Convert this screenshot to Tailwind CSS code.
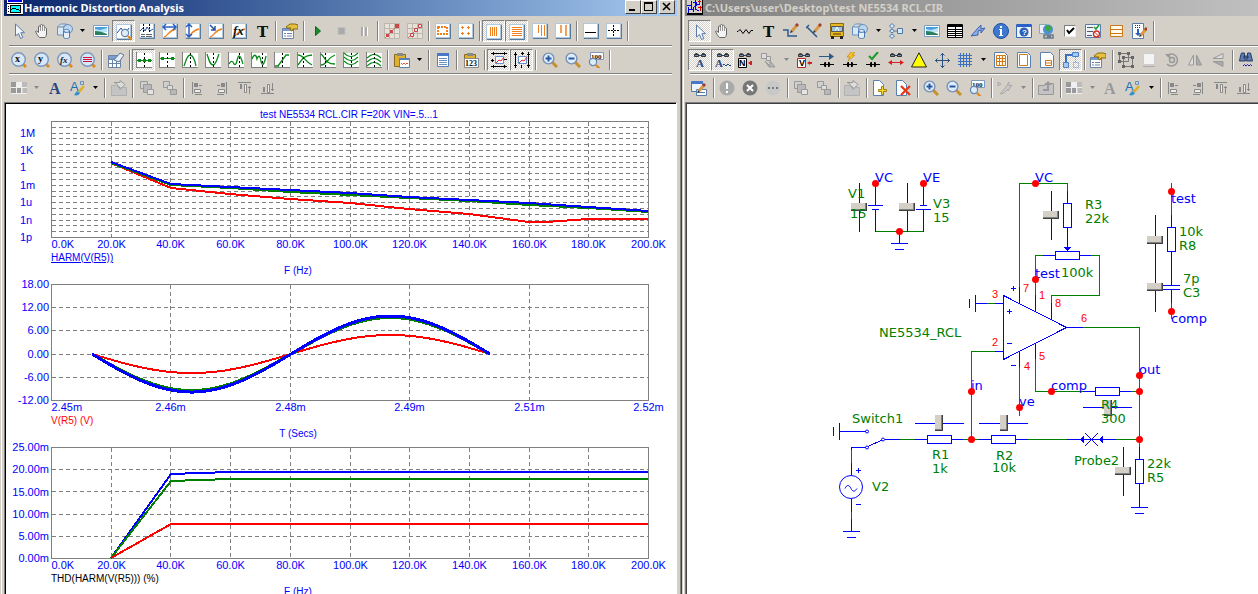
<!DOCTYPE html>
<html lang="en">
  <head>
    <meta charset="UTF-8" />
    <meta name="viewport" content="width=device-width, initial-scale=1.0" />
    <title>Harmonic Distortion Analysis</title>
    <script src="https://cdn.jsdelivr.net/npm/@tailwindcss/browser@4"></script>
  </head>
  <body class="flex h-screen overflow-hidden bg-[#d4d0c8]">
    <!-- Analysis window -->
    <section class="flex min-w-0 flex-[682] border-r border-[#404040]">
      <div class="flex min-w-0 flex-1 border-r border-[#808080] pr-[3px] pl-px">
        <div class="flex min-w-0 flex-1 flex-col border-l border-white pl-0.5">
          <header
            class="flex h-4 shrink-0 items-center bg-linear-to-r from-[#0a246a] to-[#a6caf0] pr-0.5 pl-[3px]"
          >
            <svg class="h-4 w-4 shrink-0" viewBox="0 0 16 16" shape-rendering="crispEdges">
              <path fill="#fff" d="M0 0h16v15H0z" />
              <path fill="#0000e0" d="M1 0h14v2H1z" />
              <path fill="#000" d="M0 3h16v1H0zM0 14h16v1H0zM3 5h11v8H3zM1 6h1v1H1zM1 8h1v1H1zM1 11h1v1H1z" />
              <path fill="#0ff" d="M4 6h9v6H4z" />
              <path fill="none" stroke="#000" d="M4 10l2-2h2l1 1h2l2 2" />
            </svg>
            <h1
              class="ml-px flex-1 truncate font-['Noto_Sans',sans-serif] text-[11px] leading-[14px] font-bold text-white"
            >
              Harmonic Distortion Analysis
            </h1>
            <div class="flex h-4 shrink-0 text-black">
              <button
                aria-label="Minimize"
                class="h-3.5 w-4 border border-white border-r-[#404040] border-b-[#404040] bg-[#d4d0c8]"
              >
                <svg class="h-3 w-3.5" viewBox="0 0 14 12"><path d="M3 8h6v2H3z" /></svg>
              </button>
              <button
                aria-label="Maximize"
                class="h-3.5 w-4 border border-white border-r-[#404040] border-b-[#404040] bg-[#d4d0c8]"
              >
                <svg class="h-3 w-3.5" viewBox="0 0 14 12">
                  <path d="M2 1h9v9H2zM3 3v6h7V3z" fill-rule="evenodd" />
                </svg>
              </button>
              <button
                aria-label="Close"
                class="ml-0.5 h-3.5 w-4 border border-white border-r-[#404040] border-b-[#404040] bg-[#d4d0c8]"
              >
                <svg class="h-3 w-3.5" viewBox="0 0 14 12">
                  <path d="M3 2l7 7M10 2l-7 7" stroke="#000" stroke-width="1.6" />
                </svg>
              </button>
            </div>
          </header>
          <div class="flex h-[29px] shrink-0 items-center overflow-hidden pt-px pl-[3px]" data-bar="a1"></div>
          <div class="mx-[5px] h-0.5 shrink-0 border-t border-[#808080] bg-white"></div>
          <div class="flex h-[26px] shrink-0 items-center overflow-hidden pb-px pl-[3px]" data-bar="a2"></div>
          <div class="mx-[5px] h-0.5 shrink-0 border-t border-[#808080] bg-white"></div>
          <div class="flex h-[27px] shrink-0 items-center overflow-hidden pb-0.5 pl-[3px]" data-bar="a3"></div>
          <div class="flex min-h-0 flex-1 border-t border-r border-l border-[#808080] border-r-white">
            <main class="flex-1 overflow-hidden border-t border-l border-black bg-white">
              <svg
                id="plots"
                class="block h-[490px] w-[669px] font-['Liberation_Sans',sans-serif] text-[10px]"
                viewBox="6 104 669 490"
                shape-rendering="crispEdges"
              ></svg>
            </main>
          </div>
        </div>
      </div>
    </section>

    <!-- Circuit window -->
    <section class="flex min-w-0 flex-[576] pl-px">
      <div class="flex min-w-0 flex-1 flex-col border-l border-white pl-px">
        <header
          class="flex h-4 shrink-0 items-center bg-linear-to-r from-[#808080] to-[#c0c0c0] pl-0.5"
        >
          <svg class="h-4 w-4 shrink-0" viewBox="0 0 16 16" shape-rendering="crispEdges">
            <path fill="#000" d="M0 0h16v15H0z" />
            <path fill="#d4d0c8" d="M0 0h15v13H0z" />
            <path fill="none" stroke="#0000e0" d="M0 5.5h4M4.5 1v9M1 9.5h5M5.5 2.5h4v3l-3 2v4M8.5 0v9l3 2M10 4.5h3M1.5 7v6" />
            <path fill="none" stroke="#e00000" d="M11 1.5h3M12.5 0v4M11 7.5h4M13.5 6v5" />
          </svg>
          <h1
            class="ml-0.5 flex-1 truncate font-['Noto_Sans',sans-serif] text-[11px] leading-[14px] font-bold text-[#d4d0c8]"
          >
            C:\Users\user\Desktop\test NE5534 RCL.CIR
          </h1>
        </header>
        <div class="flex h-[29px] shrink-0 items-center overflow-hidden pt-px pl-[3px]" data-bar="b1"></div>
        <div class="ml-[5px] h-0.5 shrink-0 border-t border-[#808080] bg-white"></div>
        <div class="flex h-[26px] shrink-0 items-center overflow-hidden pb-px pl-[3px]" data-bar="b2"></div>
        <div class="ml-[5px] h-0.5 shrink-0 border-t border-[#808080] bg-white"></div>
        <div class="flex h-[27px] shrink-0 items-center overflow-hidden pb-0.5 pl-[3px]" data-bar="b3"></div>
        <div class="flex min-h-0 flex-1 border-t border-l border-[#808080]">
          <main class="flex-1 overflow-hidden border-t border-l border-[#404040] bg-white">
            <svg
              id="schematic"
              class="block h-[490px] w-[571px] font-['DejaVu_Sans',sans-serif] text-[13px]"
              viewBox="687 104 571 490"
              fill="none"
              shape-rendering="crispEdges"
            ></svg>
          </main>
        </div>
      </div>
    </section>

    <script>
      // ---------- icons (16 x 16) ----------
      const page = `<path fill="#b4c8dc" d="M0 0h16v16H0z"/><path fill="#5a7a9c" d="M15 1h1v15H1v-1h14z"/><path fill="#fff" d="M1 1h13v13H1z"/>`;
      const plot = `<path fill="#fff" d="M1 1h15v14H1z"/><path fill="#808080" d="M0 0h1v16H0zM0 15h16v1H0z"/>`;
      const lens = (x, y) =>
        `<path stroke="#e08a20" stroke-width="2.4" d="M${x + 3} ${y + 3}l3.5 3.5"/><circle cx="${x}" cy="${y}" r="3.6" fill="#dcecfa" stroke="#6a86ac" stroke-width="1.2"/>`;
      const bigLens = (s) =>
        `<path stroke="#e08a20" stroke-width="3" d="M12 12l3 3"/><circle cx="7.5" cy="7.5" r="6.8" fill="#d8e8f8" stroke="#7c98bc" stroke-width="1.4"/>${s}`;
      const zoomLens = (s) =>
        `<path stroke="#c89028" stroke-width="3" d="M10 10l5 5"/><circle cx="6.5" cy="6.5" r="5.4" fill="#dcecfa" stroke="#7890b4" stroke-width="1.4"/>${s}`;
      const orange = `<path stroke="#f08020" stroke-width="1.4" d="M2 14c4-1 5-7 12-8"/>`;
      const pencil = `<path stroke="#d89848" stroke-width="3" d="M9 8l5-6"/><path stroke="#a04030" stroke-width="3" d="M13 3l2-2"/><path fill="#333" d="M7 10l1-3 2 2z"/>`;
      const glasses = `<path stroke="#444" d="M2.500 2.500l1-1h2M10 1.500h2l1.500 1M7 3.500h2"/><path fill="#6a90c8" stroke="#333" d="M2.500 2.500h4v2h-4zM9.500 2.500h4v2h-4z"/>`;
      const grey = (s) => `<g stroke="#999" fill="#b8b8b8">${s}</g>`;
      const green = (d) => `${plot}<path stroke="#0a8a1a" stroke-width="1.3" d="${d}"/>`;
      const dash = `<path stroke="#000" stroke-dasharray="2 2" d="M8.500 1v14"/>`;
      const cap = `<path stroke="#000" d="M1 12.500h14M6.500 10v5M9.500 10v5"/><path fill="#000" d="M5 10l3 2.500L5 15zM11 10l-3 2.500 3 2.500z"/>`;
      const stepGrid = `<path fill="#e6e2da" stroke="#bcb6ac" d="M.5.5h15v15H.5zM.5 5.500h15M.5 10.500h15M5.500.500v15M10.500.500v15"/><path stroke="#d07070" d="M1 15L14 2"/>`;

      const icons = {
        cursor: `<path fill="#f4f8fc" stroke="#5a7ba8" d="M4.500 1v12l3-2.500 2 5 2.300-1-2-4.800h3.700z"/>`,
        hand: `<path fill="#f4f4f4" stroke="#666" d="M5.500 14.500c-2-2-3-4-4-6 1-1 2 0 3 1V4c0-1.500 2-1.500 2 0V2.500c0-1.500 2-1.500 2 0V3c0-1 2-1 2 .5V5c1-1 2 0 2 1v5c0 2-1 3-1.500 3.500z"/><path stroke="#999" d="M6.500 4v4M8.500 3v5M10.500 4v4"/>`,
        shapes: `<path fill="#d8e8f6" stroke="#6a90bc" d="M.5 4l3-3h6v8l-3 3h-6zM.5 4h6l3-3M6.500 4v8"/><circle cx="11" cy="6" r="4.500" fill="#bcd4ec" stroke="#6a90bc"/><path fill="#e4f0fa" stroke="#4a78b0" d="M6.500 8c0-2 6-2 6 0v6c0 2-6 2-6 0zM6.500 8c0 2 6 2 6 0"/>`,
        picture: `<path fill="#fff" stroke="#7a9cc0" d="M.5 2.500h15v11H.5z"/><path fill="#48a0e0" d="M2 4h12v4H2z"/><path fill="#b8e4f8" d="M2 6l5 1 7-2v4H2z"/><path fill="#2a8060" d="M2 8c4 0 8 1 12 3v1H2z"/>`,
        scope: `${page}<path stroke="#2a50a0" d="M1 9l4-5 4 6 4-6"/>${lens(9, 9)}`,
        cursors: `${page}<path stroke="#2a50a0" d="M1 8l3-3 2 3 2-4 3 4 3-2"/><path stroke="#000" stroke-dasharray="2 1" d="M4.500 1v9M10.500 1v9"/><path stroke="#666" d="M2 11.500h4M7 11.500h6M2 13.500h4M7 13.500h6"/>`,
        horiz: `${page}${orange}<path stroke="#2a60c0" stroke-width="1.500" d="M1 4h13M4 1L1 4l3 3M11 1l3 3-3 3"/>`,
        vert: `${page}${orange}<path stroke="#2a60c0" stroke-width="1.500" d="M4 1v13M1 4l3-3 3 3M1 11l3 3 3-3"/>`,
        diag: `${page}${orange}<path stroke="#2a50a0" stroke-width="1.500" d="M2 2l5 5M7 3v4H3"/>`,
        fx: `${page}${orange}<text x="2" y="12" font-family="Liberation Serif" font-style="italic" font-weight="bold" font-size="13" fill="#111">fx</text>`,
        text: `<text x="3" y="14" font-family="DejaVu Serif" font-weight="bold" font-size="15" fill="#111">T</text>`,
        props: `<path fill="#fff" stroke="#6a84a8" d="M.5 5.500h11v10H.5z"/><path fill="#7a9cd0" d="M1 6h10v2H1z"/><path stroke="#6a84a8" d="M2 10.500h2M5 10.500h5M2 13h2M5 13h5"/><path fill="#e8c040" stroke="#8a6a10" d="M4 4l4-3h5l3 1v4h-5l-1 2-2-1 1-2H5z"/>`,
        play: `<path fill="#1a8a2a" stroke="#0a6a1a" d="M5.500 3.500v9L10.500 8z"/>`,
        stop: `<path fill="#aaa" stroke="#c0c0c0" d="M5 4.500h7v7H5z"/>`,
        pause: `<path fill="#aaa" d="M5 4h2v9H5zM9 4h2v9H9z"/><path fill="#fff" d="M7 4h1v9H7zM11 4h1v9h-1z"/>`,
        steps: `${stepGrid}<path fill="#c84848" d="M11 1h4v4h-4zM6 7h3v3H6zM2 11h3v3H2z"/>`,
        stepsOpen: `${stepGrid}<path fill="#f4e0e0" stroke="#c84848" d="M11.500 1.500h3v3h-3zM7.500 5.500h3v3h-3zM3.500 10.500h3v3h-3z"/>`,
        select: `${page}<path stroke="#f08020" stroke-width="2" stroke-dasharray="2 1" d="M3 4h9v7H3z"/>`,
        dots: `${page}<path stroke="#f08020" d="M4.500 3v3M3 4.500h3M10.500 3v3M9 4.500h3M4.500 9v3M3 10.500h3M10.500 9v3M9 10.500h3"/>`,
        vlines: `${page}<path stroke="#f08020" d="M4.500 3v9M6.500 3v9M8.500 3v9M10.500 3v9"/>`,
        hlines: `${page}<path stroke="#f08020" d="M3 3.500h10M3 5.500h10M3 7.500h10M3 9.500h10M3 11.500h10"/>`,
        vmajor: `${page}<path stroke="#f08020" d="M6.500 2v8M9.500 2v11M12.500 2v11"/>`,
        vtwo: `${page}<path stroke="#f08020" stroke-width="1.500" d="M6 2v8M11 2v11"/>`,
        baseline: `${page}<path stroke="#000" d="M2 9.500h11"/>`,
        tracker: `${page}<path stroke="#000" stroke-dasharray="2 1" d="M2 7.500h11M7.500 2v11"/>`,
        lensX: bigLens(`<text x="4" y="10" font-family="Liberation Serif" font-weight="bold" font-size="10" fill="#111">x</text>`),
        lensY: bigLens(`<text x="4" y="10" font-family="Liberation Serif" font-weight="bold" font-size="10" fill="#111">y</text>`),
        lensF: bigLens(`<text x="3" y="11" font-family="Liberation Serif" font-style="italic" font-weight="bold" font-size="9" fill="#223">fx</text>`),
        lensLines: bigLens(`<path stroke="#d01040" d="M3 5.500h9M3 7.500h9M3 9.500h9"/>`),
        tableErase: `<path fill="#fff" stroke="#6a84a8" d="M.5 3.500h12v12H.5zM.5 7.500h12M.5 11.500h12M4.500 7v8M8.500 7v8"/><path fill="#7a9cd0" d="M1 4h11v3H1z"/><path fill="#e8eef6" stroke="#607898" d="M6 8l6-7 4 2-5 7z"/>`,
        mid: `${plot}<path stroke="#0a8a1a" d="M1 8.500h15"/>${dash}<path fill="#0a8a1a" d="M2 7h3v3H2zM7 7h3v3H7zM12 7h3v3h-3z"/>`,
        midOpen: `${plot}<path stroke="#0a8a1a" d="M1 6.500h15"/>${dash}<path fill="#0a8a1a" d="M2 5h3v3H2zM12 5h3v3h-3z"/>`,
        peak: green("M2 14C4 9 5 3 8 3s5 6 6 11") + dash,
        valley: green("M2 2c2 6 3 11 6 11s4-6 6-11") + dash,
        high: green("M1 12c2-4 4-3 5 0 3 3 3-8 5-8s3 5 4 8") + `<path stroke="#000" stroke-dasharray="2 2" d="M11.500 1v14"/>`,
        low: green("M1 7c2-5 4-5 5 0 2-5 3-3 4 2s3 5 5-5") + `<path stroke="#000" stroke-dasharray="2 2" d="M11.500 1v14"/>`,
        slope: green("M4 14L12 3h3M1 14h4") + `<path stroke="#000" stroke-dasharray="2 2" d="M8.500 1v14"/>`,
        crossA: green("M1 13C5 8 5 4 15 3M1 3c6 0 7 7 14 10") + `<path stroke="#000" stroke-dasharray="2 2" d="M6.500 1v14"/>`,
        crossB: green("M1 2c5 4 4 10 14 10M1 13c6 0 6-7 14-10") + `<path stroke="#000" stroke-dasharray="2 2" d="M5.500 1v14"/>`,
        famDown: green("M1 1c5 5 9 5 14 0M1 5c5 5 9 5 14 0M1 9c5 5 9 5 14 0") + dash,
        famUp: green("M1 6c5-5 9-5 14 0M1 10c5-5 9-5 14 0M1 14c5-5 9-5 14 0") + dash,
        pastePlot: `<path fill="#e0b030" stroke="#8a6a20" d="M.5 2.500h11v12H.5z"/><path fill="#888" d="M3 1h6v3H3z"/><path fill="#fff" stroke="#5a80b0" d="M5.500 6.500h10v9h-10z"/><path fill="#5a80b0" d="M5 6h10v2H5z"/><path stroke="#e05030" d="M7 11l1.500 1.500L10 11l1.500 1.500L13 11l1 1"/>`,
        list: `<path fill="#fff" stroke="#5a80b8" d="M2.500 1.500h11v13h-11z"/><path fill="#4a78c8" d="M2 1h12v3H2z"/><path stroke="#6a90c8" d="M4 6.500h8M4 8.500h8M4 10.500h8M4 12.500h8"/>`,
        paste123: `<path fill="#e0b030" stroke="#8a6a20" d="M1.500 2.500h11v12h-11z"/><path fill="#888" d="M4 1h6v3H4z"/><path fill="#fff" stroke="#888" d="M1.500 6.500h14v9h-14z"/><text x="2" y="14" font-family="Liberation Serif" font-weight="bold" font-size="8" fill="#111">123</text>`,
        fitH: `<path fill="#fff" stroke="#6a90c8" d="M4.500 4.500h8v7h-8z"/><path stroke="#d83030" d="M5 11l3-3 2 1 3-4"/><path stroke="#000" d="M0 1.500h16M0 14.500h16M2.500 0v3M13.500 0v3M2.500 13v3M13.500 13v3M0 8.500h3M1.500 7v3M13 7.500h3"/>`,
        fitV: `<path fill="#fff" stroke="#6a90c8" d="M4.500 4.500h8v7h-8z"/><path stroke="#d83030" d="M5 11l3-3 2 1 3-4"/><path stroke="#000" d="M1.500 0v16M14.500 0v16M0 2.500h3M0 13.500h3M13 2.500h3M13 13.500h3M8.500 0v3M7 1.500h3M7.500 13v3"/>`,
        zoomIn: zoomLens(`<path stroke="#2a58a0" stroke-width="2" d="M3.500 6.500h6M6.500 3.500v6"/>`),
        zoomOut: zoomLens(`<path stroke="#2a58a0" stroke-width="2" d="M3.500 6.500h6"/>`),
        zoom100: `<path fill="#fff" stroke="#7c98bc" d="M2.500.5h13v7h-13z"/><text x="3" y="7" font-family="Liberation Serif" font-weight="bold" font-size="7" fill="#111">100</text>${lens(5, 10)}`,
        swatches: `<path fill="#999" d="M0 2h5v5H0zM0 8h5v5H0zM6 8h5v5H6z"/><path fill="#f0f0f0" d="M6 2h5v5H6z"/><path fill="#bbb" d="M11 2h5v5h-5zM12 8h4v5h-4z"/><path stroke="#eee" d="M0 7.500h16M5.500 2v11M10.500 2v11M0 13.500h16"/>`,
        letter: `<text x="2" y="14" font-family="Liberation Serif" font-weight="bold" font-size="16" fill="#2a4680">A</text>`,
        letterOff: `<text x="2" y="14" font-family="Liberation Serif" font-weight="bold" font-size="16" fill="#999">A</text>`,
        brush: `<text x="0" y="11" font-family="Liberation Sans" font-size="13" fill="#1c70b0">A</text><path stroke="#6890c0" d="M10.500 1.500h3v3h-3z"/><path stroke="#e0b020" stroke-width="2.500" d="M14 6l-5 6"/><path fill="#3090d0" d="M4 15l3-4 3 2c-1 2-3 3-6 2z"/>`,
        exportOff: grey(`<path fill="#c4c4c4" stroke="#b0b0b0" d="M.5 5.500h5l2 2h8v8H.5z"/><path fill="#ddd" d="M3 2.500h6V.500l5 4-5 5V7H7c0-2-1-4-4-4.500z"/>`),
        frontOff: grey(`<path fill="#d0d0d0" d="M1.500 1.500h7v7h-7z"/><path d="M4.500 4.500h8v8h-8z"/><path fill="#e4e4e4" d="M8.500 9.500h6v5h-6z"/>`),
        backOff: grey(`<path fill="#d0d0d0" d="M1.500 1.500h6v6h-6z"/><path fill="#ddd" d="M5.500 5.500h5v4h-5z"/><path d="M8.500 9.500h6v5h-6z"/>`),
        alignL: `<path fill="#888" d="M2 2h1v12H2zM4 3h4v4H4z"/><path fill="#eee" stroke="#888" d="M4.500 9.500h6v3h-6z"/><path stroke="#888" d="M12 5.500H9M5 14.500h7"/>`,
        alignR: `<path fill="#888" d="M13 2h1v12h-1zM8 3h4v4H8z"/><path fill="#eee" stroke="#888" d="M5.500 9.500h6v3h-6z"/><path stroke="#888" d="M4 5.500h3M4 14.500h7"/>`,
        alignT: `<path fill="#888" d="M2 2h13v1H2zM4 4h2v5H4z"/><path fill="#eee" stroke="#888" d="M8.500 4.500h2v8h-2z"/><path stroke="#888" d="M13.500 14V6M12 7.500h3"/>`,
        alignB: `<path fill="#888" d="M2 13h13v1H2zM4 7h2v5H4z"/><path fill="#eee" stroke="#888" d="M8.500 4.500h2v8h-2z"/><path stroke="#888" d="M13.500 3v8M12 9.500h3"/>`,
        zigzag: `<path stroke="#000" d="M0 8.500h1l2-2 3 4 3-4 3 4 2-3h2"/>`,
        wire: `<path stroke="#2a5a8a" stroke-width="1.500" d="M0 7h5v6h9"/>${pencil}`,
        wireDiag: `<path stroke="#2a5a8a" stroke-width="1.500" d="M1 4l10 10M0 5l3-3"/>${pencil}`,
        bus: `<path fill="#e8b820" stroke="#8a6a10" d="M1.500.5h13v13h-13z"/><path fill="#9cc4dc" stroke="#555" d="M2.500 3.500h11v5h-11z"/><path stroke="#fff" d="M6 8l2-4 2 4"/><path fill="#222" d="M2 13h3v3H2zM11 13h3v3h-3z"/><path fill="#a07810" d="M4 10h8v2H4z"/>`,
        flow: `<path fill="#d8e8f6" stroke="#4a78a8" d="M4 .5L6.500 3 4 5.500 1.500 3zM4 6L6.500 8 4 10 1.500 8zM4 11l2.500 2L4 15.500 1.500 13zM9.500 5.500h5v5h-5zM6.500 8h3"/>`,
        table: `<path fill="#fff" stroke="#000" d="M.5 1.500h15v13H.5z"/><path fill="#000" d="M1 1h14v3H1z"/><path stroke="#000" d="M1 6.500h14M1 8.500h14M1 10.500h14M1 12.500h14M8.500 2v12"/>`,
        pen: `<path fill="#8ab0e8" stroke="#3a60b0" d="M1 13L8 5l3-3v4l4-1-4 5V7l-3 1v4z"/>`,
        info: `<circle cx="8" cy="8" r="7.500" fill="#3c78d0" stroke="#2050a0"/><path fill="#fff" d="M7 3h2v2H7zM6 6h3v6h1v1H6v-1h1V7H6z"/>`,
        help: `<path fill="#eef4fc" stroke="#3a68b8" d="M.5 1.500h15v13H.5z"/><path fill="#2a60c8" d="M1 1h14v3H1z"/><circle cx="8" cy="9" r="4.500" fill="#2a60b8"/><text x="6" y="12" font-family="Liberation Sans" font-weight="bold" font-size="8" fill="#fff">?</text>`,
        globe: `<path fill="#eef" stroke="#8aa" d="M.5 1.500h7v9h-7z"/><circle cx="9" cy="6.500" r="5" fill="#4a90d8"/><path fill="#40a840" d="M6 3l4-1 3 3-3 4-3-2z"/><path stroke="#6a7a8a" stroke-width="1.500" d="M5 12h4v3H5zM10 12h4v3h-4zM8 13.500h4"/>`,
        options: `<path fill="#eef4fc" stroke="#5a7ca8" d="M.5 1.500h15v13H.5z"/><path stroke="#555" d="M2 4.500h6M2 8.500h6M2 12.500h5"/><path stroke="#1a9a2a" stroke-width="1.500" d="M9 4l2 2 3-4"/><circle cx="11.500" cy="11" r="3" fill="#fff" stroke="#d83020" stroke-width="1.400"/><path stroke="#d83020" d="M9.500 9l4 4"/>`,
        rows: `<path fill="#fffaf0" stroke="#d07818" d="M2.500 2.500h12v11h-12zM2.500 6.500h12M2.500 10.500h12"/>`,
        dropPen: `<path fill="#fff" stroke="#5a7ca8" d="M1.500.5h11v15h-11z"/><path stroke="#333" stroke-dasharray="1 1" d="M4 2.500h6M4 4.500h6"/><path fill="#2a60c0" d="M6 6h2v4h2l-3 3-3-3h2z"/><g transform="translate(1 4)">${pencil}</g>`,
        showA: `${glasses}<text x="4" y="15" font-family="Liberation Serif" font-weight="bold" font-size="11" fill="#2a4680">A</text>`,
        showAw: `${glasses}<text x="0" y="15" font-family="Liberation Serif" font-weight="bold" font-size="11" fill="#2a4680">A</text><path stroke="#2a4680" d="M8 13l1-1 2 2 2-2 2 2 1-1"/>`,
        showN: `${glasses}<path fill="#fff" stroke="#000" d="M1.500 6.500h8v9h-8z"/><text x="2" y="14" font-family="Liberation Sans" font-weight="bold" font-size="9" fill="#000">N</text><path fill="#d02020" d="M11 11l3-2v4zM13 9h2v4h-2z"/>`,
        showV: `${glasses}<path fill="#fff" stroke="#c02020" d="M1.500 6.500h8v9h-8z"/><text x="3" y="14" font-family="Liberation Sans" font-weight="bold" font-size="9" fill="#000">V</text><path fill="#d02020" d="M11 11l3-2v4zM13 10h3v2h-3z"/>`,
        copyOff: grey(`<path fill="#ddd" d="M1.500 1.500h5v5h-5zM6.500 4.500h4v4h-4z"/><path d="M5 9l5 5V9l5 6h-6z"/>`),
        current: `<path stroke="#2a5a8a" d="M0 4.500h13"/><path fill="#2a5a8a" d="M10 1l5 3.500L10 8z"/>${cap}`,
        power: `<path fill="#f8c020" stroke="#c08010" stroke-width=".6" d="M9 0h4l-3 3h3L6 9l2-4H5z"/>${cap}`,
        check: `<path stroke="#1a9a2a" stroke-width="2" d="M4 4l3 3 6-7"/>${cap}`,
        measure: `${glasses}<path stroke="#d02020" d="M2 10.500h12"/><path fill="#d02020" d="M0 10.500L4 8v5zM16 10.500L12 8v5z"/>`,
        warn: `<path fill="#ffff00" stroke="#222" d="M8 .8L15.500 15H.5z"/>`,
        cross: `<path stroke="#2a5080" d="M8.500 1v15M1 8.500h15M6.500 3.500l2-2 2 2M6.500 13.500l2 2 2-2M3.500 6.500l-2 2 2 2M13.500 6.500l2 2-2 2"/>`,
        grid: `<path stroke="#3a70c0" d="M3.500 1v14M6.500 1v14M9.500 1v14M12.500 1v14M1 3.500h14M1 6.500h14M1 9.500h14M1 12.500h14"/>`,
        pageGrid: `<path fill="#fffaf0" stroke="#5a80b0" d="M1.500.5h10l3 3v12h-13z"/><path stroke="#d07818" d="M3.500 3.500h9v10h-9zM3.500 6.500h9M3.500 9.500h9M6.500 3v10M9.500 3v10"/>`,
        pageBox: `<path fill="#fff" stroke="#5a80b0" d="M1.500.5h10l3 3v12h-13z"/><path stroke="#d07818" d="M3.500 2.500h8v11h-8z"/>`,
        pageTitle: `<path fill="#fff" stroke="#5a80b0" d="M1.500.5h10l3 3v12h-13z"/><path stroke="#d07818" d="M6.500 8.500h6v5h-6zM6 11h6"/>`,
        rubber: `<path fill="#a8c8f0" stroke="#4a80c8" d="M9.500.5h6v4h-6zM.5 10.500h5v5h-5z"/><path stroke="#3a70c0" stroke-width="2" d="M9 3H3v7"/><path stroke="#6a90c8" stroke-dasharray="1 1" d="M10.500 10.500h5v5h-5zM12.500 5v5"/>`,
        group: `<path stroke="#777" d="M1.500 1.500h9v8h-9zM5.500 5.500h9v9h-9z"/><path fill="#666" d="M0 0h3v3H0zM9 0h3v3H9zM0 8h3v3H0zM4 13h3v3H4zM13 13h3v3h-3zM13 4h3v3h-3zM4 4h3v3H4z"/>`,
        pageOff: `<path fill="#f4f4f4" stroke="#ccc" d="M2.500 1.500h11v11h-11z"/><path fill="#aaa" d="M2 14h12v1H2z"/>`,
        rotate: `<path stroke="#999" stroke-width="1.500" d="M3 4a6 6 0 1 1 0 8"/><circle cx="8" cy="8" r="2.500" stroke="#999" stroke-width="1.500"/><path fill="#999" d="M1 2h5v5z"/>`,
        flipH: `<path fill="#ddd" stroke="#999" d="M6.500 3v10h-5z"/><path fill="#aaa" stroke="#999" d="M9.500 3v10h5z"/>`,
        flipV: `<path fill="#ddd" stroke="#999" d="M13 1.500v5H3z"/><path fill="#aaa" stroke="#999" d="M13 14.500v-5H3z"/>`,
        find: `<path fill="#5a7cb0" stroke="#2a3c68" d="M3.500 1h3v3l1 5h-6l1-5zM9.500 1h3l2 8h-6l1-5zM6 4h4v2H6z"/><path stroke="#2020a0" d="M5 14l1.500-1.500L8 14l1.500-1.500L11 14l1.500-1.500L14 14"/>`,
        editForm: `<path fill="#eef4fc" stroke="#4a78b8" d="M.5 1.500h11v10H.5z"/><path fill="#4a78c8" d="M1 1h11v3H1z"/><path fill="#fff" stroke="#5a7ca8" d="M5.500 9.500h10v6h-10z"/><path stroke="#5a7ca8" d="M7 12.500h7"/><g transform="translate(-1 3)">${pencil}</g>`,
        bang: `<circle cx="8" cy="8" r="7.500" fill="#aaa"/><path fill="#fff" d="M7 3h2v6H7zM7 11h2v2H7z"/>`,
        cancel: `<circle cx="8" cy="8" r="7.500" fill="#777"/><path stroke="#fff" stroke-width="2" d="M5 5l6 6M11 5l-6 6"/>`,
        more: `<circle cx="8" cy="8" r="7.500" fill="#c8c8c8"/><path fill="#777" d="M3 7h2v2H3zM7 7h2v2H7zM11 7h2v2h-2z"/>`,
        addPage: `<path fill="#fff" stroke="#5a80b0" d="M1.500.5h6l4 4v11h-10z"/><path fill="#f8d828" stroke="#a08010" d="M9.500 6.500h2v3h3v2h-3v3h-2v-3h-3v-2h3z"/>`,
        delPage: `<path fill="#fff" stroke="#5a80b0" d="M1.500.5h6l4 4v11h-10z"/><path stroke="#e83818" stroke-width="2.200" d="M6 6l9 9M15 6l-9 9"/>`,
        penOff: `<path fill="#c8c8c8" stroke="#aaa" d="M3 14l6-7 3-5v4l3-1-4 6V9l-4 4zM1 2l3 2-3 2z"/>`,
        folderUp: grey(`<path fill="#c4c4c4" d="M.5 5.500h6l1-2h8v11H.5z"/><path fill="#999" stroke="none" d="M10 1l4 4h-3v6H5V9h4V5H6z"/>`),
      };

      // ---------- toolbars: "|" separator, "v" drop-down arrow, "w" disabled arrow, "*" pressed ----------
      const bars = {
        a1: "cursor hand shapes v picture *scope cursors horiz vert diag fx text | props | play stop pause | steps stepsOpen | select dots | *vlines *hlines vmajor vtwo | baseline tracker |",
        a2: "lensX lensY lensF lensLines | tableErase | *mid midOpen peak valley high low slope crossA crossB famDown famUp | pastePlot v | list | paste123 | *fitH *fitV | zoomIn zoomOut zoom100 |",
        a3: "swatches w letter brush v | exportOff | frontOff backOff | alignL alignR alignT alignB",
        b1: "*cursor hand zigzag text wire wireDiag bus shapes v flow v picture table pen info help globe tick options rows dropPen |",
        b2: "*showA *showAw showN copyOff w showV current power check measure warn cross grid v pageGrid pageBox pageTitle *rubber | props | group pageOff rotate flipH flipV | find",
        b3: "editForm | bang cancel more | frontOff backOff | exportOff | addPage delPage | zoomIn zoomOut zoom100 | penOff w | folderUp | swatches w letterOff brush v | alignL alignR alignT alignB",
      };

      function toolItem(token) {
        if (token === "|")
          return `<span class="mr-px ml-0.5 h-5 w-0.5 shrink-0 border-l border-[#808080] bg-white"></span>`;
        if (token === "v" || token === "w")
          return `<button aria-label="More" class="flex h-[22px] w-[13px] shrink-0 items-center justify-center">
            <svg class="h-1 w-[5px]" viewBox="0 0 5 4"><path d="M0 0h5L2.500 3z" fill="${token === "v" ? "#000" : "#888"}"/></svg></button>`;
        if (token === "tick")
          return `<label class="relative flex h-[22px] w-[23px] shrink-0 items-center justify-center">
            <input type="checkbox" checked aria-label="Enable" class="peer size-3 appearance-none border border-[#808080] border-r-[#eee] border-b-[#eee] bg-white" />
            <svg class="pointer-events-none absolute hidden size-3 peer-checked:block" viewBox="0 0 12 12"><path d="M3 5l2 3 5-5" fill="none" stroke="#000" stroke-width="2"/></svg></label>`;
        const pressed = token.startsWith("*");
        const name = token.replace("*", "");
        const look = pressed
          ? "border border-[#808080] border-r-white border-b-white [background-image:repeating-conic-gradient(#fff_0_25%,#d4d0c8_0_50%)] bg-[length:2px_2px] pt-px pl-px"
          : "";
        return `<button aria-label="${name}" aria-pressed="${pressed}" class="flex h-[22px] w-[23px] shrink-0 items-center justify-center ${look}">
          <svg class="h-4 w-4 shrink-0" viewBox="0 0 16 16" fill="none">${icons[name]}</svg></button>`;
      }

      document.querySelectorAll("[data-bar]").forEach((bar) => {
        bar.innerHTML = bars[bar.dataset.bar].split(" ").map(toolItem).join("");
      });

      // ---------- plots ----------
      const left = 51.5;
      const right = 648.5;
      const label = (x, y, text, anchor = "middle", extra = "") =>
        `<text x="${x}" y="${y}" text-anchor="${anchor}" fill="#0000ff" ${extra}>${text}</text>`;

      function drawPlot({ top, bottom, rows, cols, xLabels, yLabels, yAnchor, yX, series, name, nameAttr, axis }) {
        const base = bottom - 0.5;
        let out = "";
        for (let i = 1; i < rows; i++) {
          const y = Math.round(top + ((bottom - top) * i) / rows - 0.5) + 0.5;
          out += `<path d="M${left} ${y}H${right}" stroke="#808080" stroke-dasharray="4 3"/>`;
        }
        const step = (right - left) / cols;
        for (const [i, text] of xLabels) {
          const x = Math.round(left + step * i - 0.5) + 0.5;
          if (i > 0 && i < cols)
            out += `<path d="M${x} ${top}V${bottom}" stroke="#808080" stroke-dasharray="4 3"/>`;
          out += label(i ? x : left, base + 11, text, i ? "middle" : "start", 'font-size="11"');
        }
        for (const [y, text] of yLabels) out += label(yX, y + 4, text, yAnchor, 'font-size="11"');
        out += `<rect x="${left}" y="${top}" width="${right - left}" height="${bottom - top}" fill="none" stroke="#808080"/>`;
        for (const [color, width, points] of series)
          out += `<polyline points="${points}" fill="none" stroke="${color}" stroke-width="${width}"/>`;
        out += `<text x="51" y="${base + 24}" ${nameAttr}>${name}</text>`;
        out += label(298, base + 37, axis);
        return out;
      }

      function sine(amplitude) {
        const pts = [];
        for (let x = 92; x <= 490; x += 2)
          pts.push(`${x},${(354 + amplitude * Math.sin(((x - 92) / 398) * 2 * Math.PI)).toFixed(1)}`);
        return pts.join(" ");
      }

      const freqs = ["0.0K", "20.0K", "40.0K", "60.0K", "80.0K", "100.0K", "120.0K", "140.0K", "160.0K", "180.0K", "200.0K"].map((t, i) => [i, t]);

      document.getElementById("plots").innerHTML =
        label(349, 118, "test NE5534 RCL.CIR F=20K VIN=.5...1") +
        drawPlot({
          top: 121.5, bottom: 237.5, rows: 20, cols: 10, xLabels: freqs,
          yLabels: [[133, "1M"], [150, "1K"], [167, "1"], [185, "1m"], [202, "1u"], [220, "1n"], [237, "1p"]],
          yAnchor: "start", yX: 20,
          series: [
            ["#ff0000", 2, "111,163 171,188 230,194 290,199 350,203 409,209 469,214 529,222 546,222 588,219 648,219"],
            ["#008000", 2, "111,163 171,185 230,188 290,192 350,195 409,198 469,201 529,205 588,208 648,212"],
            ["#0000ff", 2, "111,162 171,184 230,187 290,190 350,193 409,197 469,200 529,203 588,207 648,211"],
          ],
          name: "HARM(V(R5))", nameAttr: 'fill="#0000ff" text-decoration="underline"', axis: "F (Hz)",
        }) +
        drawPlot({
          top: 284.5, bottom: 400.5, rows: 5, cols: 5,
          xLabels: ["2.45m", "2.46m", "2.48m", "2.49m", "2.51m", "2.52m"].map((t, i) => [i, t]),
          yLabels: [[284, "18.00"], [307, "12.00"], [330, "6.00"], [354, "0.00"], [377, "-6.00"], [400, "-12.00"]],
          yAnchor: "end", yX: 49,
          series: [["#ff0000", 2, sine(19)], ["#008000", 3, sine(36.5)], ["#0000ff", 3, sine(38)]],
          name: "V(R5) (V)", nameAttr: 'fill="#ff0000"', axis: "T (Secs)",
        }) +
        drawPlot({
          top: 447.5, bottom: 558.5, rows: 5, cols: 10, xLabels: freqs,
          yLabels: [[447, "25.00m"], [469, "20.00m"], [492, "15.00m"], [514, "10.00m"], [536, "5.00m"], [558, "0.00m"]],
          yAnchor: "end", yX: 49,
          series: [
            ["#0000ff", 2, "111,558 171,474 200,473 230,472 648,472"],
            ["#008000", 2, "111,558 171,481 200,480 230,479 648,479"],
            ["#ff0000", 2, "111,558 171,524 648,524"],
          ],
          name: "THD(HARM(V(R5))) (%)", nameAttr: 'fill="#000"', axis: "F (Hz)",
        });

      // ---------- schematic ----------
      const wires = `M875 231.5H924M1019.5 287V183.5H1067.5V191M1043 255.5H1035.5V295M1091 255.5H1099.5V295.5H1051.5V303
        M987 303.5H995M995 351.5H971.5V439M1083 327.5H1139.5V447M1019.5 367V416M1035.5 359V391.5H1083M1131 391.5H1139
        M900 439.5H915M963 439.5H979M1028 439.5H1067M1116 439.5H1139M851.5 449V463M851.5 512V519M1171.5 183V215M1171.5 303V319`;
      const parts = `M875.5 183V205M868 205.5H883M872 209.5H879M875.5 209V232M859.5 183V232
        M923.5 183V205M920 205.5H927M916 209.5H931M923.5 209V232M907.5 183V232M899.5 232V243M891 243.5H908M895 249.5H904
        M1019.5 287V303M1067.5 191V203M1063.5 203.5h8v24h-8zM1067.5 228V251M1055.5 251.5h24v8h-24zM1043 255.5H1055M1080 255.5H1091
        M1051.5 303V319M1035.5 295V311M1051.5 191V240M1003.5 295.5L1066.5 327.5L1003.5 359.5ZM976 303.5H987M995 303.5H1003
        M975.5 295V312M969.5 299V308M995 351.5H1003M1066 327.5H1083M1019.5 351V367M1035.5 343V359
        M1083 391.5H1095M1095.5 387.5h24v8h-24zM1120 391.5H1131M1083 407.5H1132
        M885 439.5H900M915 439.5H927M927.5 435.5h24v8h-24zM952 439.5H963M979 439.5H991M991.5 435.5h24v8h-24zM1016 439.5H1028
        M1067 439.5H1116M1085 433L1098 446M1098 433L1085 446M915 423.5H964M979 423.5H1028
        M1139.5 447V459M1135.5 459.5h8v24h-8zM1139.5 484V507M1131 507.5H1148M1135 513.5H1144M1123.5 447V496
        M833.5 427V436M839.5 423V440M840 431.5H866M868 446.5L882 440M866 447.5H851.5V450M851.5 463V475M851.5 499V512M851.5 519V531
        M843 531.5H860M847 537.5H856M1171.5 215V227M1167.5 227.5h8v24h-8zM1171.5 252V285M1163 285.5H1180M1163 289.5H1180M1171.5 290V303
        M1155.5 215V312M1011 288.5h5M1013.500 286v5M1007 311.5h5M1009.500 309v5M1007 343.5h5M1011 365.5h5M856 470.5h5M858.500 468v5M856 504.5h5`;
      const dots = [
        [875, 183], [923, 183], [899, 231], [1035, 183], [1035, 279], [971, 391], [971, 439], [1019, 407], [1051, 391],
        [1139, 391], [1139, 375], [1139, 439], [1171, 191], [1171, 311],
      ];
      const names = [
        [875, 182, "VC"], [923, 182, "VE"], [1035, 182, "VC"], [1035, 278, "test"], [971, 390, "in"], [1019, 406, "ve"],
        [1051, 390, "comp"], [1139, 374, "out"], [1171, 203, "test"], [1171, 323, "comp"],
      ];
      const values = [
        [848, 198, "V1"], [850, 218, "15"], [933, 208, "V3"], [933, 222, "15"], [1085, 209, "R3"], [1085, 223, "22k"],
        [1061, 277, "100k"], [879, 337, "NE5534_RCL"], [852, 423, "Switch1"], [932, 459, "R1"], [932, 473, "1k"],
        [996, 460, "R2"], [992, 472, "10k"], [1101, 409, "R4"], [1101, 423, "300"], [1074, 465, "Probe2"],
        [1147, 468, "22k"], [1147, 482, "R5"], [872, 491, "V2"], [1179, 236, "10k"], [1179, 250, "R8"],
        [1183, 283, "7p"], [1183, 297, "C3"],
      ];
      const pins = [
        [1023, 292, "7"], [1039, 299, "1"], [1055, 307, "8"], [992, 298, "3"], [992, 346, "2"], [1081, 322, "6"],
        [1039, 360, "5"], [1024, 370, "4"],
      ];
      // slider knobs: x, y, upright?
      const knobs = [
        [851, 203], [899, 203], [1043, 211], [1115, 467], [1147, 236], [1147, 283], [935, 415, 1], [1000, 415, 1], [1104, 400, 1],
      ];

      const knob = ([x, y, upright]) => {
        const w = upright ? 8 : 16;
        const h = upright ? 16 : 8;
        return `<rect x="${x}" y="${y}" width="${w}" height="${h}" fill="#404040"/><rect x="${x}" y="${y}" width="${w - 1}" height="${h - 1}" fill="#808080"/><rect x="${x}" y="${y}" width="${w - 2}" height="${h - 2}" fill="#d4d0c8"/>`;
      };
      const texts = (list, color) => list.map(([x, y, t]) => `<text x="${x}" y="${y}" fill="${color}">${t}</text>`).join("");

      document.getElementById("schematic").innerHTML = `
        <path d="${wires}" stroke="#008000"/>
        <path d="${parts}" stroke="#0000ff"/>
        <g stroke="#0000ff">
          <circle cx="851" cy="487" r="11.5" shape-rendering="auto"/>
          <path d="M845 488.500c2-4 4-4 6 0s4 3 6 0" shape-rendering="auto"/>
          <circle cx="867" cy="431.500" r="1.500" shape-rendering="auto"/><circle cx="867" cy="447.500" r="1.500" shape-rendering="auto"/><circle cx="883" cy="439.500" r="1.500" shape-rendering="auto"/>
        </g>
        <path d="M1064 247h7l-3 4h-1zM1080 439.500l4-4v8zM1099 439.500l4-4v8z" fill="#0000ff"/>
        ${knobs.map(knob).join("")}
        ${texts(names, "#0000ff")}
        ${texts(values, "#008000")}
        <g font-family="Liberation Sans" font-size="11">${texts(pins, "#ff0000")}</g>
        ${dots.map(([x, y]) => `<circle cx="${x + 0.5}" cy="${y + 0.5}" r="3.500" fill="#ff0000" shape-rendering="auto"/>`).join("")}`;
    </script>
  </body>
</html>
